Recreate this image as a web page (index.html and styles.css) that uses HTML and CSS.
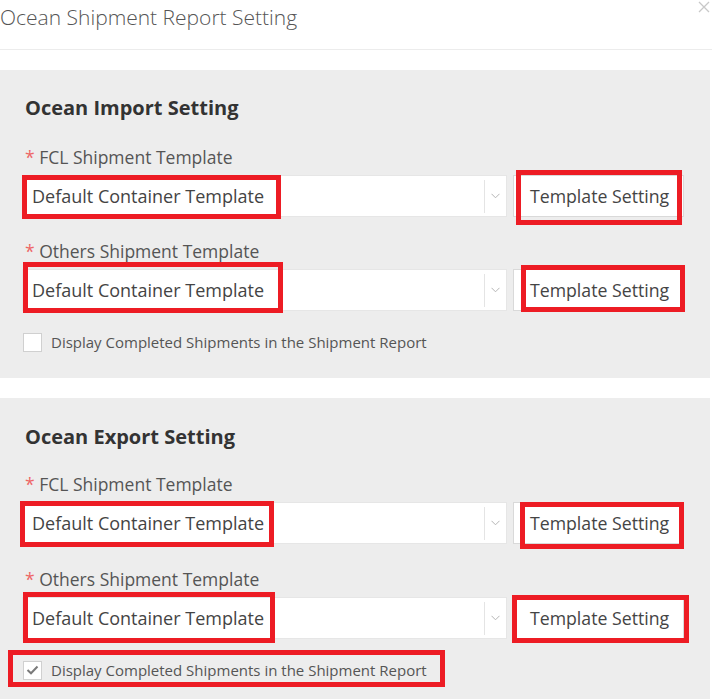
FILE: index.html
```html
<!DOCTYPE html>
<html>
<head>
<meta charset="utf-8">
<title>Ocean Shipment Report Setting</title>
<link rel="stylesheet" href="styles.css">
</head>
<body>
<div class="modal">
  <header class="modal-header">
    <h2 class="modal-title">Ocean Shipment Report Setting</h2>
    <span class="close">
      <svg width="12" height="12" viewBox="0 0 12 12"><path d="M1 1L11 11M11 1L1 11" stroke="#c8c8c8" stroke-width="1.3" fill="none"/></svg>
    </span>
  </header>

  <section class="panel panel-import">
    <h3 class="panel-title">Ocean Import Setting</h3>
    <div class="field">
      <label class="field-label"><span class="req">*</span> FCL Shipment Template</label>
      <div class="field-row">
        <div class="select"><span class="select-value">Default Container Template</span><span class="select-sep"></span><span class="select-arrow"><svg width="9" height="6" viewBox="0 0 9 6"><path d="M0.5 0.8L4.5 4.8L8.5 0.8" stroke="#b5b5b5" stroke-width="1" fill="none"/></svg></span></div>
        <button class="btn">Template Setting</button>
      </div>
    </div>
    <div class="field">
      <label class="field-label"><span class="req">*</span> Others Shipment Template</label>
      <div class="field-row">
        <div class="select"><span class="select-value">Default Container Template</span><span class="select-sep"></span><span class="select-arrow"><svg width="9" height="6" viewBox="0 0 9 6"><path d="M0.5 0.8L4.5 4.8L8.5 0.8" stroke="#b5b5b5" stroke-width="1" fill="none"/></svg></span></div>
        <button class="btn">Template Setting</button>
      </div>
    </div>
    <label class="check">
      <span class="box"></span>
      <span class="check-label">Display Completed Shipments in the Shipment Report</span>
    </label>
  </section>

  <section class="panel panel-export">
    <h3 class="panel-title">Ocean Export Setting</h3>
    <div class="field">
      <label class="field-label"><span class="req">*</span> FCL Shipment Template</label>
      <div class="field-row">
        <div class="select"><span class="select-value">Default Container Template</span><span class="select-sep"></span><span class="select-arrow"><svg width="9" height="6" viewBox="0 0 9 6"><path d="M0.5 0.8L4.5 4.8L8.5 0.8" stroke="#b5b5b5" stroke-width="1" fill="none"/></svg></span></div>
        <button class="btn">Template Setting</button>
      </div>
    </div>
    <div class="field">
      <label class="field-label"><span class="req">*</span> Others Shipment Template</label>
      <div class="field-row">
        <div class="select"><span class="select-value">Default Container Template</span><span class="select-sep"></span><span class="select-arrow"><svg width="9" height="6" viewBox="0 0 9 6"><path d="M0.5 0.8L4.5 4.8L8.5 0.8" stroke="#b5b5b5" stroke-width="1" fill="none"/></svg></span></div>
        <button class="btn">Template Setting</button>
      </div>
    </div>
    <label class="check">
      <span class="box checked"><svg width="13" height="10" viewBox="0 0 13 10"><path d="M1.5 5L5 8.3L11.5 1.5" stroke="#7a7a7a" stroke-width="2" fill="none"/></svg></span>
      <span class="check-label">Display Completed Shipments in the Shipment Report</span>
    </label>
  </section>

  <div class="mark mark-1"></div>
  <div class="mark mark-2"></div>
  <div class="mark mark-3"></div>
  <div class="mark mark-4"></div>
  <div class="mark mark-5"></div>
  <div class="mark mark-6"></div>
  <div class="mark mark-7"></div>
  <div class="mark mark-8"></div>
  <div class="mark mark-9"></div>
</div>
</body>
</html>
```
FILE: styles.css
```css
html, body {
  margin: 0;
  padding: 0;
  background: #ffffff;
}
body {
  font-family: "Open Sans", "Liberation Sans", sans-serif;
  color: #444;
  height: 699px;
  overflow: hidden;
}
.modal {
  position: relative;
  width: 712px;
}
.modal-header {
  display: flex;
  justify-content: space-between;
  align-items: flex-start;
  height: 50px;
  border-bottom: 1px solid #ececec;
  box-sizing: border-box;
  margin-bottom: 20px;
}
.modal-title {
  margin: 0;
  font-size: 21px;
  font-weight: 300;
  color: #555;
  line-height: 34px;
}
.close {
  display: block;
  margin: 1px 2px 0 0;
  line-height: 0;
}
.panel {
  width: 710px;
  background: #ededed;
  box-sizing: border-box;
  padding: 25px 0 0 22px;
}
.panel-import {
  height: 308px;
}
.panel-export {
  margin-top: 20px;
  height: 301px;
  padding-top: 26px;
}
.panel-title {
  margin: 0 0 0 3px;
  font-size: 20px;
  font-weight: 700;
  color: #333;
  line-height: 26px;
}
.field {
  margin-top: 22px;
}
.panel-import .field:first-of-type {
  margin-top: 24px;
}
.field + .field {
  margin-top: 22px;
}
.panel-export .field + .field {
  margin-top: 23px;
}
.field-label {
  display: block;
  font-size: 17.5px;
  color: #555;
  line-height: 25px;
  margin-left: 3px;
}
.req {
  color: #e66;
}
.field-row {
  display: flex;
  gap: 6px;
  margin-top: 5px;
}
.select {
  width: 485px;
  height: 42px;
  box-sizing: border-box;
  background: #fff;
  border: 1px solid #e6e6e6;
  display: flex;
  align-items: center;
}
.select-value {
  flex: 1;
  font-size: 18px;
  color: #444;
  padding-left: 9px;
}
.select-sep {
  width: 1px;
  height: 33px;
  background: #e4e4e4;
}
.select-arrow {
  width: 21px;
  display: flex;
  justify-content: center;
  line-height: 0;
}
.btn {
  width: 171px;
  height: 42px;
  box-sizing: border-box;
  background: #fff;
  border: 1px solid #d9d9d9;
  font-family: inherit;
  font-size: 17.7px;
  color: #444;
  text-align: left;
  padding: 0 0 0 16px;
}
.check {
  display: flex;
  align-items: center;
  gap: 9px;
  margin: 21px 0 0 1px;
}
.box {
  width: 19px;
  height: 19px;
  box-sizing: border-box;
  background: #fff;
  border: 1px solid #d0d0d0;
  display: flex;
  align-items: center;
  justify-content: center;
}
.check-label {
  font-size: 15px;
  color: #555;
}
.mark {
  position: absolute;
  border: 5px solid #ed1c24;
  box-sizing: border-box;
}
.mark-1 { left: 22px; top: 175px; width: 259px; height: 44px; }
.mark-2 { left: 516px; top: 170px; width: 166px; height: 55px; }
.mark-3 { left: 23px; top: 262px; width: 260px; height: 51px; }
.mark-4 { left: 521px; top: 265px; width: 164px; height: 47px; }
.mark-5 { left: 20px; top: 501px; width: 254px; height: 46px; }
.mark-6 { left: 520px; top: 502px; width: 164px; height: 47px; }
.mark-7 { left: 23px; top: 592px; width: 252px; height: 51px; }
.mark-8 { left: 512px; top: 595px; width: 177px; height: 48px; }
.mark-9 { left: 8px; top: 650px; width: 437px; height: 37px; }
```
